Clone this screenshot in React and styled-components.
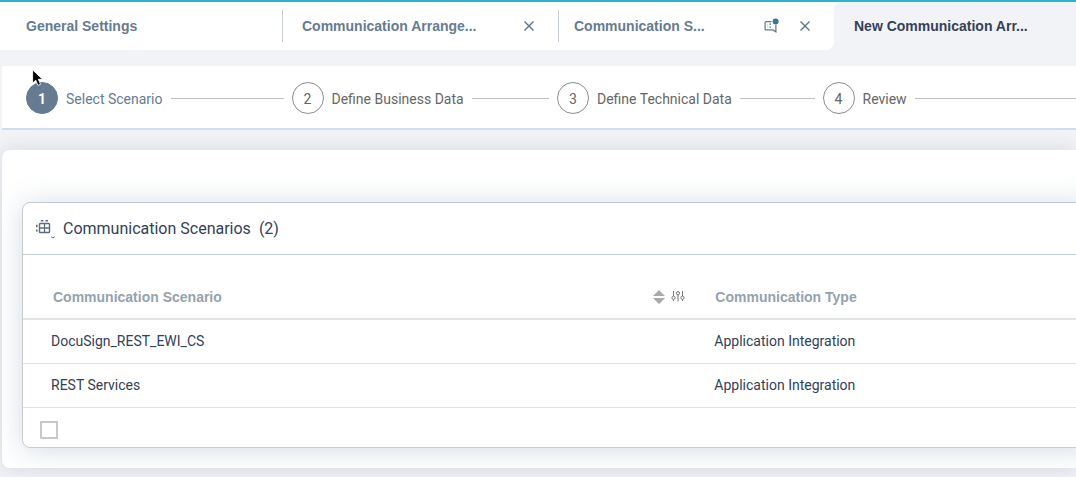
import React, { useState } from "react";
import styled, { createGlobalStyle, css } from "styled-components";

const color = {
  page: "#f2f3f7",
  accent: "#2bb3cb",
  slate: "#667b92",
  ink: "#32415a",
  muted: "#666666",
  head: "#95a2ae",
  line: "#c5ccd3",
  rowLine: "#dfe1e4",
};

const boldFamily = `"Liberation Sans", Arial, sans-serif`;

const GlobalStyle = createGlobalStyle`
  *, *::before, *::after { box-sizing: border-box; }
  body {
    margin: 0;
    overflow-x: hidden;
    background: ${color.page};
    color: ${color.ink};
    font: 14px/20px Roboto, "Liberation Sans", sans-serif;
  }
  button { padding: 0; border: 0; background: none; color: inherit; font: inherit; cursor: pointer; }
`;

const Page = styled.div`
  position: relative;
  min-height: 100vh;
  overflow: hidden;
  border-top: 2px solid ${color.accent};
`;

const TabBar = styled.nav`
  display: flex;
  height: 48px;
  margin-bottom: 16px;
`;

const OpenTabs = styled.div`
  display: flex;
  align-items: center;
  background: #fff;
  border-bottom-right-radius: 8px;
`;

const Tab = styled.div`
  display: flex;
  align-items: center;
  width: ${(p) => (p.$first ? 283 : p.$last ? 275 : 276)}px;
  height: 32px;
  padding: 0 20px 0 ${(p) => (p.$first ? 26 : p.$last ? 15 : 19)}px;
  border-right: ${(p) => (p.$last ? "0" : `1px solid ${color.line}`)};
  color: ${color.slate};
`;

const TabName = styled.button`
  && {
    font-family: ${boldFamily};
    font-weight: 700;
  }
  margin-right: auto;
  white-space: nowrap;
`;

const IconButton = styled.button`
  display: flex;
  align-items: center;
  justify-content: center;
  width: 18px;
  height: 20px;
  margin-left: 16px;
`;

const CurrentTab = styled.div`
  flex: 1;
  min-width: 0;
  background: linear-gradient(#fff, #fff) top left / 8px 8px no-repeat;
`;

const CurrentTabBody = styled.div`
  display: flex;
  align-items: center;
  height: 100%;
  padding: 0 20px;
  border-top-left-radius: 8px;
  background: ${color.page};
  color: ${color.ink};
`;

const Wizard = styled.ol`
  display: grid;
  grid-template-columns: repeat(4, 1fr);
  align-items: center;
  height: 64px;
  margin: 0 -12px 0 2px;
  padding: 2px 0 0 24px;
  border-bottom: 2px solid #d1deea;
  background: #fff;
  list-style: none;
`;

const Step = styled.li`
  display: flex;
  align-items: center;
  gap: 8px;
  padding-right: 8px;
  color: ${(p) => (p.$current ? color.slate : color.muted)};

  &::after {
    content: "";
    flex: 1;
    height: 1px;
    background: #bfc1c3;
  }
`;

const StepButton = styled.button`
  display: flex;
  align-items: center;
  gap: 8px;
  white-space: nowrap;
`;

const StepNumber = styled.span`
  display: grid;
  place-items: center;
  width: 32px;
  height: 32px;
  padding-top: 2px;
  border: 1px solid #8c8c8c;
  border-radius: 50%;
  ${(p) =>
    p.$current &&
    css`
      border-color: ${color.slate};
      background: ${color.slate};
      color: #fff;
      font-weight: 700;
    `}
`;

const StepLabel = styled.span`
  padding-top: 2px;
`;

const Panel = styled.main`
  margin: 20px 0 0 2px;
  padding: 52px 0 20px 20px;
  border-radius: 8px 0 0 8px;
  background: #fff;
  box-shadow: 0 0 20px rgba(100, 115, 135, 0.2);
`;

const Card = styled.section`
  margin-right: -20px;
  border: 1px solid ${color.line};
  border-radius: 8px;
  background: #fff;
  box-shadow: 0 2px 28px rgba(90, 120, 150, 0.26);
`;

const CardHeader = styled.header`
  display: flex;
  align-items: center;
  gap: 8px;
  height: 52px;
  padding-left: 12px;
  border-bottom: 1px solid ${color.line};
`;

const Title = styled.h1`
  display: flex;
  gap: 8px;
  margin: 0;
  font-size: 16px;
  font-weight: 400;
`;

const Table = styled.table`
  width: 100%;
  border-collapse: separate;
  border-spacing: 0;
  table-layout: fixed;
`;

const ScenarioColumn = styled.col`
  width: 63%;
`;

const HeadCell = styled.th`
  height: 65px;
  padding: 20px 13px 0 30px;
  border-bottom: 2px solid #e3e4e6;
  color: ${color.head};
  font-family: ${boldFamily};
  font-weight: 700;
  text-align: left;
  & + & { padding-left: 17px; }
`;

const HeadContent = styled.div`
  display: flex;
  align-items: center;
  gap: 6px;
`;

const HeadLabel = styled.span`
  margin-right: auto;
`;

const HeadButton = styled.button`
  display: flex;
`;

const Cell = styled.td`
  height: 44px;
  padding: 0 0 1px 28px;
  border-bottom: 1px solid ${color.rowLine};
  & + & { padding-left: 16px; }
`;

const CardFooter = styled.footer`
  display: flex;
  align-items: center;
  height: 39px;
  padding: 4px 17px 0;
`;

const Checkbox = styled.input`
  appearance: none;
  width: 18px;
  height: 18px;
  margin: 0;
  border: 2px solid #c8c8c8;
  border-radius: 1px;
  background: #fff;
  &:checked { background: ${color.slate}; }
`;

const Pointer = styled.svg`
  position: absolute;
  top: 66px;
  left: 31px;
  pointer-events: none;
`;

const CloseIcon = () => (
  <svg width="12" height="12" viewBox="0 0 12 12" fill="none" stroke="#5c748b" strokeWidth="1.4" aria-hidden="true">
    <path d="M1.5 1.5l9 9M10.5 1.5l-9 9" />
  </svg>
);

const DraftIcon = () => (
  <svg width="16" height="16" viewBox="0 0 16 16" fill="none" stroke="#607990" strokeWidth="1.2" aria-hidden="true">
    <path d="M8.5 3.6H3.1a1 1 0 0 0-1 1v6.3a1 1 0 0 0 1 1H10l2.9 1.9V7" />
    <path d="M4.8 5.6v4.4" strokeWidth=".8" opacity=".4" />
    <path d="M7.2 5.2v1.8M7.2 8.4v1.5" />
    <circle cx="12.6" cy="3.4" r="3" fill="#3f7391" stroke="none" />
  </svg>
);

const TableIcon = () => (
  <svg width="20" height="20" viewBox="0 0 20 20" fill="none" stroke="#5c6c7d" aria-hidden="true">
    <rect x="4.5" y="4.5" width="10" height="9" rx=".8" strokeWidth="1.4" />
    <path d="M9.5 5v9M5 9h9.5" strokeWidth="1.3" />
    <path d="M5.8 1.8h2.6M10.4 1.8H13" strokeWidth="1.6" />
    <path d="M1.8 5.8v2.4M1.8 10.4v2.2" strokeWidth="1.6" />
    <path d="M16.2 17.8q1.8 2.2 3.6 0" strokeWidth="1" />
  </svg>
);

const SortIcon = () => (
  <svg width="12" height="16" viewBox="0 0 12 16" fill="#aaa" aria-hidden="true">
    <path d="M6 1l6 6H0zM0 9h12l-6 6z" />
  </svg>
);

const SettingsIcon = () => (
  <svg width="14" height="14" viewBox="0 0 14 14" fill="none" stroke="#777" aria-hidden="true">
    <path d="M2.5 1v5M2.5 9.5V11M7 1v1M7 5v6.5M11.5 1v5M11.5 9.5V11" />
    <circle cx="2.5" cy="7.8" r="1.6" />
    <circle cx="7" cy="3.2" r="1.6" />
    <circle cx="11.5" cy="7.8" r="1.6" />
  </svg>
);

const steps = ["Select Scenario", "Define Business Data", "Define Technical Data", "Review"];

const scenarios = [
  { name: "DocuSign_REST_EWI_CS", type: "Application Integration" },
  { name: "REST Services", type: "Application Integration" },
];

export default function App() {
  const [step, setStep] = useState(0);

  return (
    <>
      <GlobalStyle />
      <Page>
        <TabBar aria-label="Open views">
          <OpenTabs>
            <Tab $first>
              <TabName>General Settings</TabName>
            </Tab>
            <Tab>
              <TabName>Communication Arrange...</TabName>
              <IconButton aria-label="Close tab"><CloseIcon /></IconButton>
            </Tab>
            <Tab $last>
              <TabName>Communication S...</TabName>
              <IconButton aria-label="Unsaved draft"><DraftIcon /></IconButton>
              <IconButton aria-label="Close tab"><CloseIcon /></IconButton>
            </Tab>
          </OpenTabs>
          <CurrentTab>
            <CurrentTabBody>
              <TabName aria-current="page">New Communication Arr...</TabName>
            </CurrentTabBody>
          </CurrentTab>
        </TabBar>

        <Wizard>
          {steps.map((label, i) => (
            <Step key={label} $current={i === step}>
              <StepButton onClick={() => setStep(i)}>
                <StepNumber $current={i === step}>{i + 1}</StepNumber>
                <StepLabel>{label}</StepLabel>
              </StepButton>
            </Step>
          ))}
        </Wizard>

        <Panel>
          <Card>
            <CardHeader>
              <TableIcon />
              <Title>
                <span>Communication Scenarios</span>
                <span>({scenarios.length})</span>
              </Title>
            </CardHeader>
            <Table>
              <colgroup>
                <ScenarioColumn />
                <col />
              </colgroup>
              <thead>
                <tr>
                  <HeadCell>
                    <HeadContent>
                      <HeadLabel>Communication Scenario</HeadLabel>
                      <HeadButton aria-label="Sort"><SortIcon /></HeadButton>
                      <HeadButton aria-label="Column settings"><SettingsIcon /></HeadButton>
                    </HeadContent>
                  </HeadCell>
                  <HeadCell>Communication Type</HeadCell>
                </tr>
              </thead>
              <tbody>
                {scenarios.map((s) => (
                  <tr key={s.name}>
                    <Cell>{s.name}</Cell>
                    <Cell>{s.type}</Cell>
                  </tr>
                ))}
              </tbody>
            </Table>
            <CardFooter>
              <Checkbox type="checkbox" aria-label="Select all scenarios" />
            </CardFooter>
          </Card>
        </Panel>

        <Pointer width="13" height="20" viewBox="0 0 12 18" aria-hidden="true">
          <path d="M1.5 1.5v12.2l2.9-2.7 2 4.8 2.4-1-2-4.6h3.9z" fill="#000" stroke="#fff" strokeWidth=".8" />
        </Pointer>
      </Page>
    </>
  );
}
